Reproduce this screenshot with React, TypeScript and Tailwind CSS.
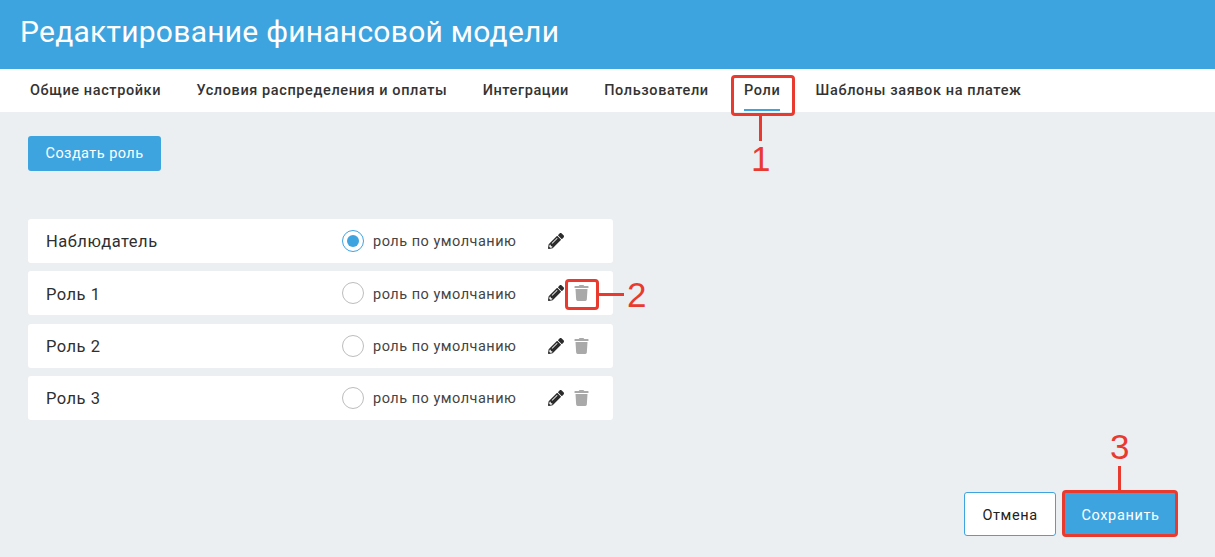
import { FaPencilAlt, FaTrash } from 'react-icons/fa';

const TABS = ['Общие настройки', 'Условия распределения и оплаты', 'Интеграции', 'Пользователи', 'Роли', 'Шаблоны заявок на платеж'];

const ROLES = [
  { name: 'Наблюдатель', isDefault: true },
  { name: 'Роль 1', isDefault: false },
  { name: 'Роль 2', isDefault: false },
  { name: 'Роль 3', isDefault: false },
];

function RoleRow({ name, isDefault }: { name: string; isDefault: boolean }): React.ReactElement {
  return (
    <div className="flex h-11 w-[585px] items-center rounded-[3px] bg-white pl-[18px]">
      <span className="w-[296px] pt-[3px] text-[16.5px] tracking-[0.5px] text-[#2f2f2f]">{name}</span>
      {isDefault ? (
        <span className="flex h-[22px] w-[22px] items-center justify-center rounded-full border border-[#3ea4e0] bg-white">
          <span className="h-3 w-3 rounded-full bg-[#3ea4e0]" />
        </span>
      ) : (
        <span className="h-[22px] w-[22px] rounded-full border border-[#bdbdbd] bg-white" />
      )}
      <span className="ml-[9px] w-[175px] pt-0.5 text-[14.5px] tracking-[0.5px] text-[#444]">роль по умолчанию</span>
      <FaPencilAlt className="h-4 w-4 text-[#2b2b2b]" />
      {!isDefault && <FaTrash className="ml-[10px] h-4 w-[15px] text-[#a9a9a9]" />}
    </div>
  );
}

export default function App(): React.ReactElement {
  return (
    <div className="relative flex h-[557px] w-[1215px] flex-col overflow-hidden bg-[#ebeff2] font-['Roboto',sans-serif]">
      <header className="flex h-[69px] items-center bg-[#3ea4e0] pb-[6px] pl-5">
        <h1 className="text-[30px] font-normal tracking-[0.25px] text-white">Редактирование финансовой модели</h1>
      </header>

      <nav className="flex h-[43px] gap-[35.3px] bg-white pl-[30px]">
        {TABS.map(tab => (
          <div key={tab} className="relative pt-[11px] text-[14.5px] font-medium tracking-[0.6px] text-[#333]">
            {tab}
            {tab === 'Роли' && <span className="absolute bottom-px left-0 h-0.5 w-full bg-[#3ea4e0]" />}
          </div>
        ))}
      </nav>

      <main className="flex flex-1 flex-col px-7 pt-6">
        <button className="h-[35px] w-[133px] rounded-[3px] bg-[#3ea4e0] text-[14.5px] tracking-[0.45px] text-white">
          Создать роль
        </button>

        <div className="mt-12 flex flex-col gap-[8.4px]">
          {ROLES.map(role => (
            <RoleRow key={role.name} name={role.name} isDefault={role.isDefault} />
          ))}
        </div>

        <div className="mt-[72px] flex justify-end gap-2 pr-[11px]">
          <button className="h-11 w-[92px] rounded-[3px] border border-[#3ea4e0] bg-white pt-[3px] text-[14.5px] tracking-[0.6px] text-[#222]">
            Отмена
          </button>
          <button className="h-11 w-[112px] rounded-[3px] bg-[#3ea4e0] pt-[3px] pl-px text-[14.5px] tracking-[0.65px] text-white">
            Сохранить
          </button>
        </div>
      </main>

      {/* red annotations on top of the screenshot */}
      <div className="absolute left-[731px] top-[75px] h-[41px] w-[64px] rounded-[4px] border-[3px] border-[#e93a30]" />
      <div className="absolute left-[759px] top-[116px] h-[25px] w-[3px] bg-[#e93a30]" />
      <span className="absolute left-[751px] top-[140px] font-['Liberation_Sans',sans-serif] text-[35px] leading-[38px] text-[#e93a30]">1</span>

      <div className="absolute left-[565px] top-[279px] h-[31px] w-[34px] rounded-[4px] border-[3px] border-[#e93a30]" />
      <div className="absolute left-[599px] top-[293px] h-[3px] w-[25px] bg-[#e93a30]" />
      <span className="absolute left-[627px] top-[276px] font-['Liberation_Sans',sans-serif] text-[35px] leading-[38px] text-[#e93a30]">2</span>

      <div className="absolute left-[1062px] top-[490px] h-[47px] w-[116px] rounded-[4px] border-[3px] border-[#e93a30]" />
      <div className="absolute left-[1118px] top-[466px] h-[25px] w-[3px] bg-[#e93a30]" />
      <span className="absolute left-[1110px] top-[428px] font-['Liberation_Sans',sans-serif] text-[35px] leading-[38px] text-[#e93a30]">3</span>
    </div>
  );
}
